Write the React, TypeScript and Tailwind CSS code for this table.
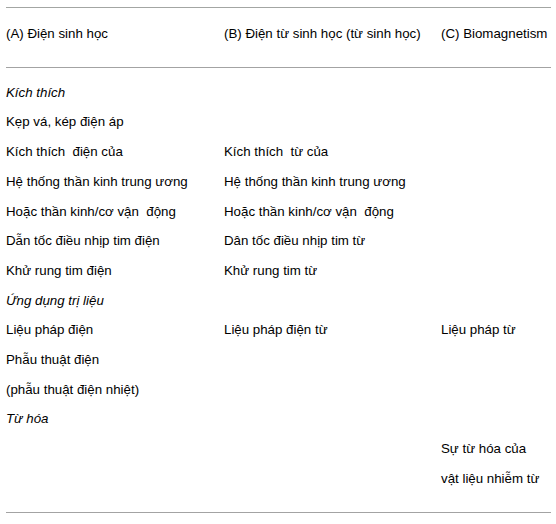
import React from "react";

type Row = { a?: string; b?: string; c?: string; italic?: boolean };

const rows: Row[] = [
  { a: "Kích thích", italic: true },
  { a: "Kẹp vá, kép điện áp" },
  { a: "Kích thích  điện của", b: "Kích thích  từ của" },
  { a: "Hệ thống thần kinh trung ương", b: "Hệ thống thần kinh trung ương" },
  { a: "Hoặc thần kinh/cơ vận  động", b: "Hoặc thần kinh/cơ vận  động" },
  { a: "Dẫn tốc điều nhịp tim điện", b: "Dân tốc điều nhịp tim từ" },
  { a: "Khử rung tim điện", b: "Khử rung tim từ" },
  { a: "Ứng dụng trị liệu", italic: true },
  { a: "Liệu pháp điện", b: "Liệu pháp điện từ", c: "Liệu pháp từ" },
  { a: "Phẫu thuật điện" },
  { a: "(phẫu thuật điện nhiệt)" },
  { a: "Từ hóa", italic: true },
  { c: "Sự từ hóa của" },
  { c: "vật liệu nhiễm từ" },
];

export default function App() {
  return (
    <div
      className="w-[556px] h-[524px] bg-white text-black text-[13.3px] pt-[7px]"
      style={{ fontFamily: '"Liberation Sans", Arial, sans-serif' }}
    >
      <div className="ml-[6px] w-[545px]">
        <div className="border-t border-[#a3a6a3] pt-[11px] pb-[18px] grid grid-cols-[218px_217px_1fr] leading-[29.7px]">
          <div>(A) Điện sinh học</div>
          <div>(B) Điện từ sinh học (từ sinh học)</div>
          <div>(C) Biomagnetism</div>
        </div>
        <div className="border-t border-[#a3a3a3] pt-[10px] pb-[18px] leading-[29.7px]">
          {rows.map((r, i) => (
            <div
              key={i}
              className={`grid grid-cols-[218px_217px_1fr] whitespace-pre ${r.italic ? "italic" : ""}`}
            >
              <div>{r.a ?? ""}</div>
              <div>{r.b ?? ""}</div>
              <div>{r.c ?? ""}</div>
            </div>
          ))}
        </div>
        <div className="border-t border-[#a3a3a3]" />
      </div>
    </div>
  );
}
